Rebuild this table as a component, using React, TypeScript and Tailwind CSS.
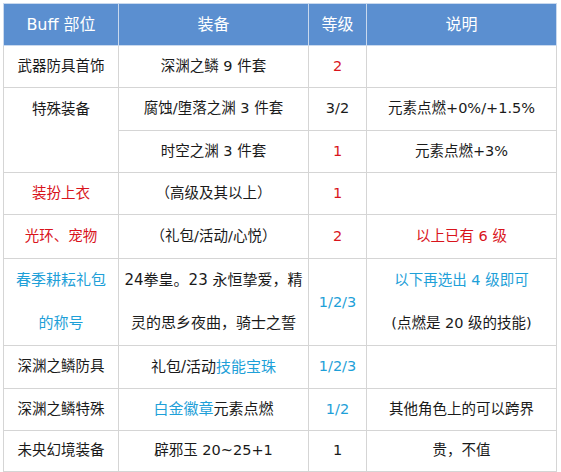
import React from "react";

const RED = "text-[#d9141c]";
const CYAN = "text-[#1ea0d8]";

const td = "border border-[#d5d5d5] text-center align-middle px-1";
const th = "border border-[#c9d9ee] bg-[#5b8fd0] text-white font-normal text-center align-middle";

export default function App() {
  return (
    <div
      className="bg-white w-[561px] h-[472px] pl-[3px] pt-[3px] text-[#1a1a1a] text-[14.5px]"
      style={{ fontFamily: '"DejaVu Sans", "Noto Sans CJK SC", sans-serif' }}
    >
      <table className="table-fixed border-collapse w-[553px]">
        <colgroup>
          <col className="w-[115px]" />
          <col className="w-[190px]" />
          <col className="w-[58px]" />
          <col className="w-[190px]" />
        </colgroup>
        <thead>
          <tr className="h-[42px] text-[16px]">
            <th className={th}>Buff 部位</th>
            <th className={th}>装备</th>
            <th className={th}>等级</th>
            <th className={th}>说明</th>
          </tr>
        </thead>
        <tbody>
          <tr className="h-[42px]">
            <td className={td}>武器防具首饰</td>
            <td className={td}>深渊之鳞 9 件套</td>
            <td className={`${td} ${RED}`}>2</td>
            <td className={td}></td>
          </tr>
          <tr className="h-[43px]">
            <td className={`${td} align-top pt-[11px]`} rowSpan={2}>特殊装备</td>
            <td className={td}>腐蚀/堕落之渊 3 件套</td>
            <td className={td}>3/2</td>
            <td className={td}>元素点燃+0%/+1.5%</td>
          </tr>
          <tr className="h-[42px]">
            <td className={td}>时空之渊 3 件套</td>
            <td className={`${td} ${RED}`}>1</td>
            <td className={td}>元素点燃+3%</td>
          </tr>
          <tr className="h-[42px]">
            <td className={`${td} ${RED}`}>装扮上衣</td>
            <td className={td}>（高级及其以上）</td>
            <td className={`${td} ${RED}`}>1</td>
            <td className={td}></td>
          </tr>
          <tr className="h-[44px]">
            <td className={`${td} ${RED}`}>光环、宠物</td>
            <td className={td}>（礼包/活动/心悦）</td>
            <td className={`${td} ${RED}`}>2</td>
            <td className={`${td} ${RED}`}>以上已有 6 级</td>
          </tr>
          <tr className="h-[82px] leading-[43px]">
            <td className={`${td} ${CYAN} text-[15px]`}>
              春季耕耘礼包
              <br />
              的称号
            </td>
            <td className={`${td} text-[15px]`}>
              24拳皇。23 永恒挚爱，精
              <br />
              灵的思乡夜曲，骑士之誓
            </td>
            <td className={`${td} ${CYAN}`}>1/2/3</td>
            <td className={td}>
              <span className={CYAN}>以下再选出 4 级即可</span>
              <br />
              (点燃是 20 级的技能)
            </td>
          </tr>
          <tr className="h-[43px]">
            <td className={td}>深渊之鳞防具</td>
            <td className={`${td} text-[15px]`}>
              礼包/活动<span className={CYAN}>技能宝珠</span>
            </td>
            <td className={`${td} ${CYAN}`}>1/2/3</td>
            <td className={td}></td>
          </tr>
          <tr className="h-[42px]">
            <td className={td}>深渊之鳞特殊</td>
            <td className={`${td} text-[15px]`}>
              <span className={CYAN}>白金徽章</span>元素点燃
            </td>
            <td className={`${td} ${CYAN}`}>1/2</td>
            <td className={td}>其他角色上的可以跨界</td>
          </tr>
          <tr className="h-[41px]">
            <td className={td}>未央幻境装备</td>
            <td className={td}>辟邪玉 20~25+1</td>
            <td className={td}>1</td>
            <td className={td}>贵，不值</td>
          </tr>
        </tbody>
      </table>
    </div>
  );
}
